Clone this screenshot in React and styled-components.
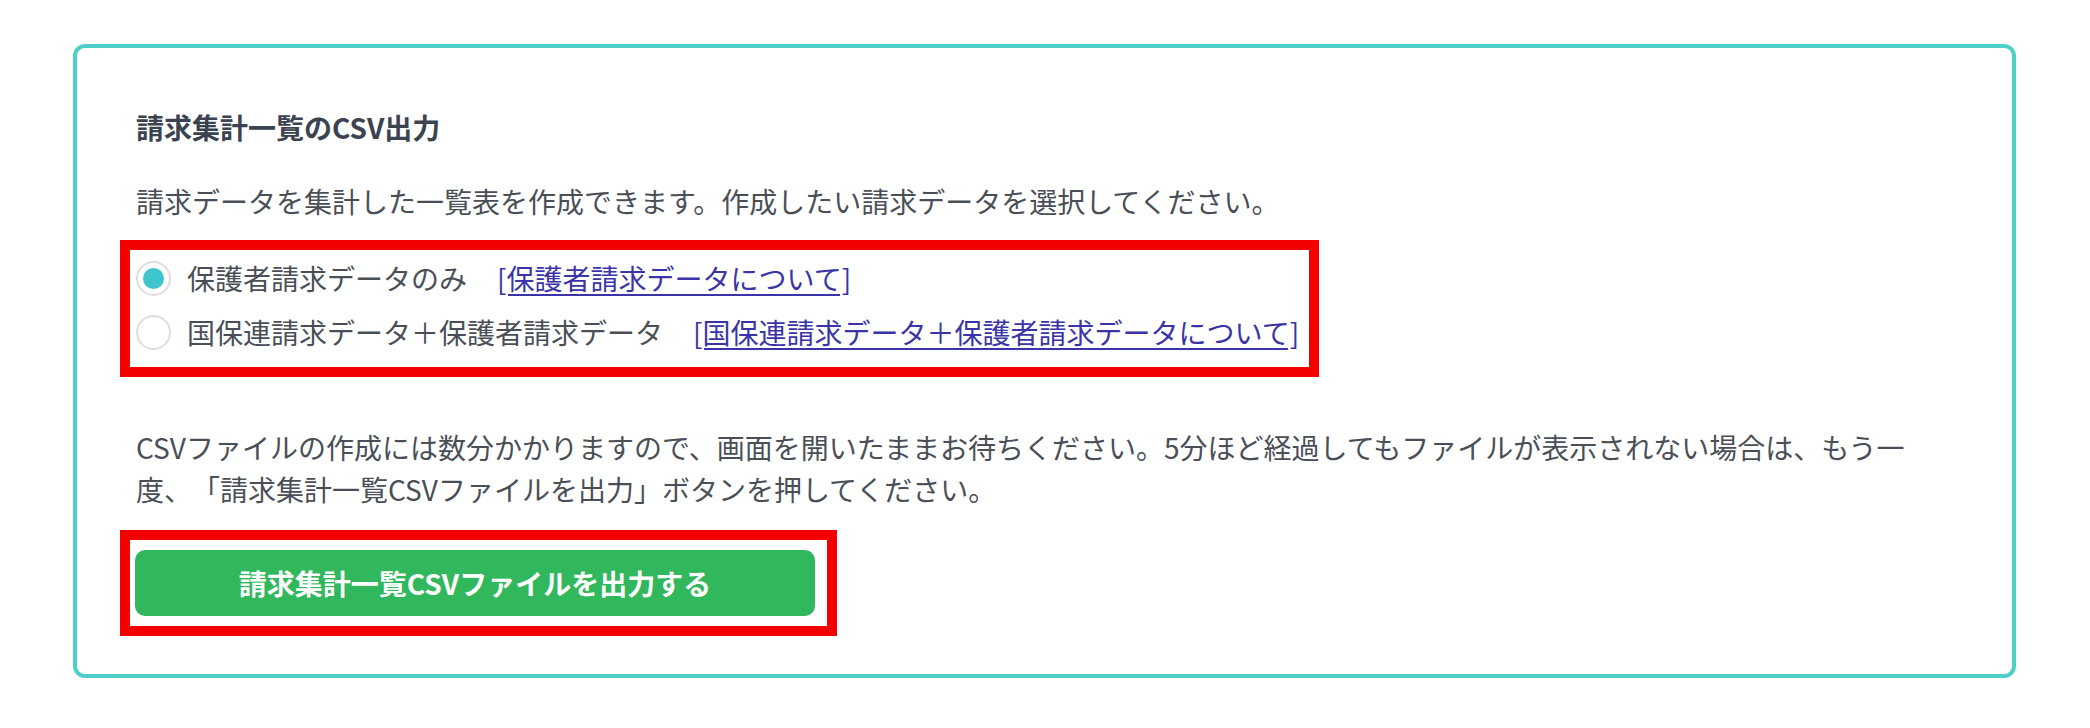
import styled, { createGlobalStyle } from "styled-components";

const GlobalStyle = createGlobalStyle`
  body {
    margin: 0;
    background: #fff;
    font-family: "Noto Sans CJK JP", "Noto Sans", sans-serif;
    color: #4a4f57;
    text-spacing-trim: space-all;
  }
`;

const Page = styled.div`
  padding: 44px 74px 40px 73px;
`;

const Card = styled.section`
  border: 4px solid #4ecfca;
  border-radius: 12px;
  padding: 59px 59px 38px;
`;

const Heading = styled.h2`
  margin: 0;
  font-size: 28px;
  line-height: 40px;
  font-weight: 700;
  color: #3b4350;
`;

const Text = styled.p`
  margin: ${({ $top }) => $top}px 0 0;
  font-size: 28px;
  line-height: 42px;
  color: #4a4f57;
  max-width: ${({ $max }) => ($max ? `${$max}px` : "none")};
`;

const Highlight = styled.div`
  width: fit-content;
  margin: ${({ $top }) => $top}px 0 0 -16px;
  border: 10px solid #f40000;
  padding: ${({ $pad }) => $pad};
`;

const RadioRow = styled.label`
  display: flex;
  align-items: center;
  height: 54px;
  font-size: 28px;
  color: #4a4f57;
  cursor: pointer;
`;

const Circle = styled.span`
  flex: none;
  width: 35px;
  height: 35px;
  box-sizing: border-box;
  border: 2px solid #dedede;
  border-radius: 50%;
  display: flex;
  align-items: center;
  justify-content: center;
  margin-right: 16px;

  &::after {
    content: "";
    width: 21px;
    height: 21px;
    border-radius: 50%;
    background: ${({ $on }) => ($on ? "#3ec4cb" : "transparent")};
  }
`;

const Help = styled.a`
  margin-left: 30px;
  color: #3a34a8;
  text-decoration: underline;
  text-underline-offset: 4px;
`;

const Button = styled.button`
  display: block;
  width: 680px;
  height: 66px;
  border: none;
  border-radius: 10px;
  background: #31b75c;
  color: #fff;
  font-family: inherit;
  font-size: 28px;
  font-weight: 700;
  cursor: pointer;
`;

const options = [
  {
    label: "保護者請求データのみ",
    help: "[保護者請求データについて]",
    checked: true,
  },
  {
    label: "国保連請求データ＋保護者請求データ",
    help: "[国保連請求データ＋保護者請求データについて]",
    checked: false,
  },
];

export default function App() {
  return (
    <>
      <GlobalStyle />
      <Page>
        <Card>
          <Heading>請求集計一覧のCSV出力</Heading>
          <Text $top={33}>
            請求データを集計した一覧表を作成できます。作成したい請求データを選択してください。
          </Text>

          <Highlight $top={18} $pad="1px 10px 8px 6px">
            {options.map((o) => (
              <RadioRow key={o.label}>
                <Circle $on={o.checked} />
                {o.label}
                <Help href="#">{o.help}</Help>
              </RadioRow>
            ))}
          </Highlight>

          <Text $top={49} $max={1800}>
            CSVファイルの作成には数分かかりますので、画面を開いたままお待ちください。5分ほど経過してもファイルが表示されない場合は、もう一度、「請求集計一覧CSVファイルを出力」ボタンを押してください。
          </Text>

          <Highlight $top={20} $pad="10px 12px 10px 5px">
            <Button>請求集計一覧CSVファイルを出力する</Button>
          </Highlight>
        </Card>
      </Page>
    </>
  );
}
